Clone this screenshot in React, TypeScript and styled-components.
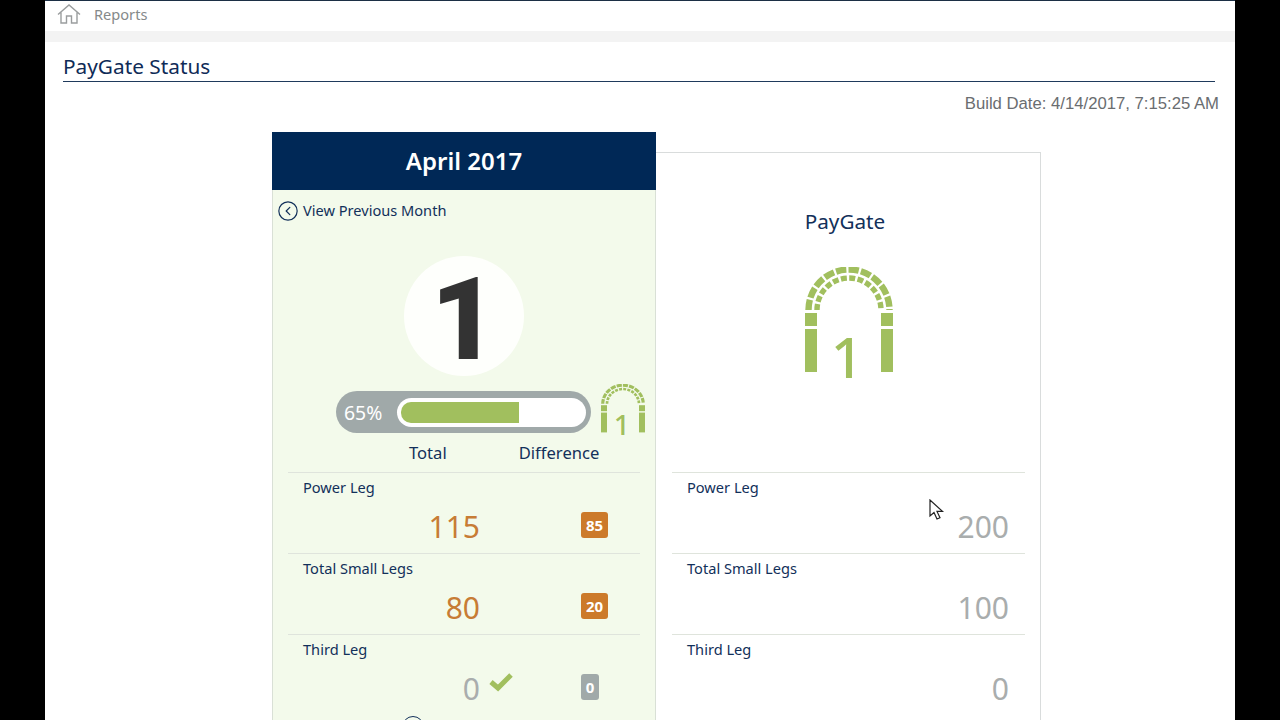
import styled, { createGlobalStyle } from 'styled-components';
import { CircleChevronLeft } from 'lucide-react';

const GlobalStyle = createGlobalStyle`
	html, body {
		margin: 0;
		height: 720px;
		overflow: hidden;
		background: #000;
		font-family: 'Noto Sans', 'Open Sans', sans-serif;
	}
`;

const Frame = styled.div`
	position: relative;
	width: 1190px;
	height: 720px;
	margin-left: 45px;
	overflow: hidden;
	background: #fff;
`;

const TopBar = styled.div`
	display: flex;
	align-items: center;
	gap: 13px;
	box-sizing: border-box;
	height: 31px;
	padding: 0 0 4px 12px;
	border-top: 1px solid #1c2f45;
	color: #85898a;
	font-size: 14.6px;
`;

const Strip = styled.div`
	height: 11px;
	background: #f3f3f3;
`;

const Title = styled.h1`
	margin: 0 20px 0 18px;
	height: 39px;
	border-bottom: 1px solid #1f3a5c;
	color: #0f2b57;
	font-size: 20.8px;
	font-weight: 400;
	line-height: 49px;
`;

const BuildDate = styled.div`
	height: 50px;
	padding-right: 16px;
	color: #6a6d70;
	font-family: 'Liberation Sans', Arial, sans-serif;
	font-size: 16.7px;
	line-height: 44px;
	text-align: right;
`;

const Board = styled.div`
	display: flex;
	align-items: flex-start;
	padding-left: 227px;
`;

const MonthColumn = styled.section`
	width: 384px;
	height: 640px;
	background: #f3faeb;
	box-sizing: border-box;
	border: 1px solid #d9e0d6;
	border-top: 0;
`;

const MonthHeader = styled.header`
	margin: 0 -1px;
	height: 58px;
	background: #002856;
	color: #fff;
	font-size: 24px;
	font-weight: 600;
	line-height: 58px;
	text-align: center;
`;

const PrevLink = styled.div`
	display: flex;
	align-items: center;
	gap: 4px;
	height: 42px;
	padding: 0 0 3px 4px;
	box-sizing: border-box;
	color: #12305a;
	font-size: 14.6px;
`;

const PrevIcon = styled(CircleChevronLeft)`
	margin-top: 2px;
`;

const RankCircle = styled.div`
	display: flex;
	align-items: center;
	justify-content: center;
	box-sizing: border-box;
	width: 120px;
	height: 120px;
	margin: 24px auto 11px;
	padding-top: 8px;
	border-radius: 50%;
	background: #feffFC;
	color: #333;
	font-family: Roboto, 'Liberation Sans', sans-serif;
	font-size: 115px;
	font-weight: 900;
	line-height: 112px;
`;

const ProgressRow = styled.div`
	display: flex;
	align-items: flex-start;
	height: 50px;
	padding-left: 63px;
	gap: 10px;
`;

const ProgressPill = styled.div`
	display: flex;
	align-items: center;
	justify-content: space-between;
	box-sizing: border-box;
	width: 255px;
	height: 42px;
	margin-top: 4px;
	padding: 0 5px 0 8px;
	border-radius: 21px;
	background: #a0a9a9;
	color: #fff;
	font-size: 19.4px;
`;

const ProgressTrack = styled.div`
	box-sizing: border-box;
	width: 189px;
	height: 29px;
	padding: 4px;
	border-radius: 15px;
	background: #fff;
`;

const ProgressFill = styled.div`
	height: 100%;
	border-radius: 10px 0 0 10px;
	background: #a1bf5e;
`;

const SmallArch = styled.div`
	margin-top: -3px;
`;

const ColumnHeads = styled.div`
	display: flex;
	height: 35px;
	color: #12305a;
	font-size: 16.6px;
	line-height: 31px;
`;

const HeadTotal = styled.span`
	margin-left: 136px;
`;

const HeadDifference = styled.span`
	margin-left: 72px;
`;

const Row = styled.div`
	box-sizing: border-box;
	height: 81px;
	margin: 0 15px;
	padding: 4px 15px 0;
	border-top: 1px solid #dfe4dc;
`;

const RowLabel = styled.div`
	color: #12305a;
	font-size: 14.6px;
	line-height: 20px;
`;

const RowValues = styled.div`
	display: flex;
	align-items: center;
	height: 46px;
	margin-top: 7px;
`;

const Value = styled.div<{ $tone: 'orange' | 'grey' }>`
	width: 177px;
	color: ${p => (p.$tone === 'orange' ? '#c77c35' : '#a9adad')};
	font-size: 30px;
	line-height: 46px;
	text-align: right;
`;

const PlainValue = styled(Value)`
	width: 100%;
	padding-right: 1px;
	box-sizing: border-box;
`;

const Check = styled.svg`
	width: 24px;
	height: 20px;
	margin: -14px 0 0 9px;
`;

const Badge = styled.span<{ $tone: 'orange' | 'grey' }>`
	display: flex;
	align-items: center;
	justify-content: center;
	box-sizing: border-box;
	width: ${p => (p.$tone === 'orange' ? '27px' : '18px')};
	height: 26px;
	margin-left: ${p => (p.$tone === 'orange' ? '101px' : '68px')};
	margin-top: -4px;
	border-radius: 3px;
	background: ${p => (p.$tone === 'orange' ? '#cc7a2a' : '#a0a9a9')};
	color: #fff;
	font-size: 15px;
	font-weight: 700;
`;

const NextCircle = styled.div`
	width: 20px;
	height: 20px;
	margin: 1px 0 0 129px;
	border: 1.5px solid #12305a;
	border-radius: 50%;
`;

const GoalColumn = styled.section`
	box-sizing: border-box;
	width: 385px;
	height: 620px;
	margin-top: 20px;
	padding-left: 1px;
	border: 1px solid #d9dcdc;
	border-left: 0;
`;

const GoalTitle = styled.div`
	height: 83px;
	color: #12305a;
	font-size: 20.7px;
	line-height: 137px;
	text-align: center;
	padding-right: 7px;
`;

const GoalArch = styled.div`
	display: flex;
	justify-content: center;
	height: 236px;
	padding: 31px 0 0 0;
	box-sizing: border-box;
	overflow: hidden;
`;

const ArchSvg = styled.svg<{ $w: number; $h: number }>`
	display: block;
	flex: none;
	width: ${p => p.$w}px;
	height: ${p => p.$h}px;
`;

const Cursor = styled.svg`
	position: absolute;
	left: 884px;
	top: 499px;
	width: 16px;
	height: 22px;
`;

const Arch = ({ w, h }: { w: number; h: number }) => (
	<ArchSvg $w={w} $h={h} viewBox='0 0 88 128' preserveAspectRatio='none'>
		<g fill='none' stroke='#a1bf5e'>
			<path d='M3.5 43A40.5 40.5 0 0 1 84.5 43' strokeWidth='6.4' strokeDasharray='10.4 2.2' />
			<path d='M12 43A32 32 0 0 1 76 43' strokeWidth='5.4' strokeDasharray='6 2.4' />
		</g>
		<g fill='#a1bf5e'>
			<rect x='0' y='46' width='12' height='13' />
			<rect x='76' y='46' width='12' height='13' />
			<rect x='0' y='62' width='12' height='43' />
			<rect x='76' y='62' width='12' height='43' />
			<text x='42' y='111' fontFamily="'Noto Sans', sans-serif" fontSize='57' fontWeight='500' textAnchor='middle'>
				1
			</text>
		</g>
	</ArchSvg>
);

type RowData = { label: string; total: string; diff: string; goal: string; done?: boolean };

const rows: RowData[] = [
	{ label: 'Power Leg', total: '115', diff: '85', goal: '200' },
	{ label: 'Total Small Legs', total: '80', diff: '20', goal: '100' },
	{ label: 'Third Leg', total: '0', diff: '0', goal: '0', done: true },
];

const App = () => (
	<>
		<GlobalStyle />
		<Frame>
			<TopBar>
				<svg width='24' height='20' viewBox='0 0 24 20' fill='none' stroke='#9a9d9e' strokeWidth='1.4'>
					<path d='M1 10.5 12 1l11 9.5M4 8.5V19h5.5v-7h5v7H20V8.5' />
				</svg>
				Reports
			</TopBar>
			<Strip />
			<Title>PayGate Status</Title>
			<BuildDate>Build Date: 4/14/2017, 7:15:25 AM</BuildDate>
			<Board>
				<MonthColumn>
					<MonthHeader>April 2017</MonthHeader>
					<PrevLink>
						<PrevIcon size={22} strokeWidth={1.3} color='#12305a' />
						View Previous Month
					</PrevLink>
					<RankCircle>1</RankCircle>
					<ProgressRow>
						<ProgressPill>
							65%
							<ProgressTrack>
								<ProgressFill style={{ width: '65%' }} />
							</ProgressTrack>
						</ProgressPill>
						<SmallArch>
							<Arch w={44} h={59} />
						</SmallArch>
					</ProgressRow>
					<ColumnHeads>
						<HeadTotal>Total</HeadTotal>
						<HeadDifference>Difference</HeadDifference>
					</ColumnHeads>
					{rows.map(row => (
						<Row key={row.label}>
							<RowLabel>{row.label}</RowLabel>
							<RowValues>
								<Value $tone={row.done ? 'grey' : 'orange'}>{row.total}</Value>
								{row.done && (
									<Check viewBox='0 0 24 20'>
										<path d='M2 10l7 6L22 3' fill='none' stroke='#a1bf5e' strokeWidth='5' />
									</Check>
								)}
								<Badge $tone={row.done ? 'grey' : 'orange'}>{row.diff}</Badge>
							</RowValues>
						</Row>
					))}
					<NextCircle />
				</MonthColumn>
				<GoalColumn>
					<GoalTitle>PayGate</GoalTitle>
					<GoalArch>
						<Arch w={88} h={128} />
					</GoalArch>
					{rows.map(row => (
						<Row key={row.label}>
							<RowLabel>{row.label}</RowLabel>
							<RowValues>
								<PlainValue $tone='grey'>{row.goal}</PlainValue>
							</RowValues>
						</Row>
					))}
				</GoalColumn>
			</Board>
			<Cursor viewBox='0 0 16 22'>
				<path d='M1 1v16l4-3.5 3 6.5 3-1.3-3-6.3h5.5z' fill='#fff' stroke='#222' strokeWidth='1.2' />
			</Cursor>
		</Frame>
	</>
);

export default App;
